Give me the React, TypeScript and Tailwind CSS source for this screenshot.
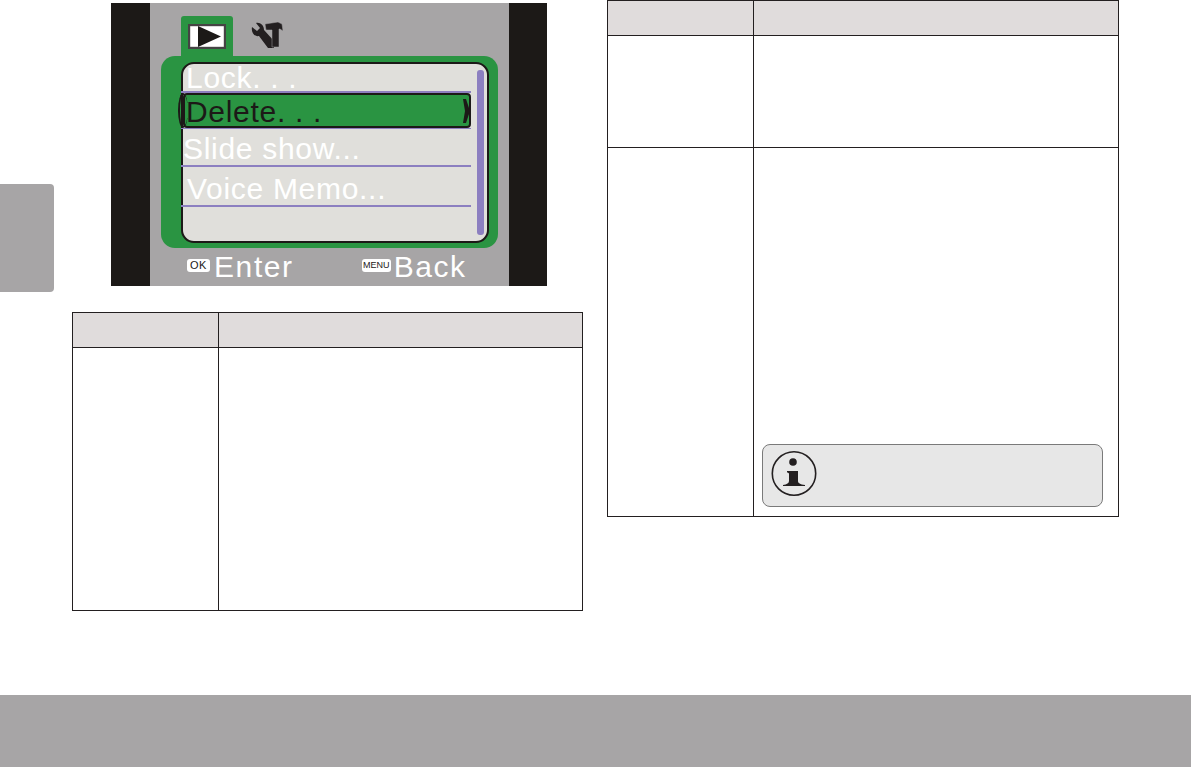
const sans = "font-['Liberation_Sans',Arial,sans-serif]";

function ToolsIcon() {
  return (
    <svg width="33" height="28" viewBox="0 0 33 28" className="ml-[18px] mt-[5px] shrink-0">
      {/* wrench */}
      <path d="M1 6 L6 10 L9 7 L5 2 C9 1 13 4 13 9 L23 20 L23 27 L17 27 L8 15 C3 16 0 11 1 6 Z" fill="#231f20" />
      {/* hammer */}
      <path d="M14 3 L27 1 L31 3 L32 10 L29 8 L28 8 L28 26 L21 26 L21 9 L15 9 Z" fill="#231f20" stroke="#a7a5a6" strokeWidth="0.5" />
    </svg>
  );
}

function PlayBox() {
  return (
    <svg width="38" height="25" viewBox="0 0 38 25">
      <rect x="1" y="1" width="36" height="23" fill="#ffffff" stroke="#454344" strokeWidth="2.4" />
      <path d="M10 2 L33 12.5 L10 23 Z" fill="#1c1917" />
    </svg>
  );
}

function InfoIcon() {
  return (
    <svg width="46" height="46" viewBox="0 0 46 46" className="shrink-0 mb-[3px]">
      <circle cx="23" cy="22.5" r="21.7" fill="none" stroke="#231f20" strokeWidth="1.6" />
      <circle cx="22" cy="11" r="3.8" fill="#231f20" />
      <path d="M16 20 L27 20 L27 30 C27 32 29 33.5 34 34 L34 35 L12 35 L12 34 C16 33.5 18 32 18 30 L18 23 C18 22 17 21.5 16 21.5 Z" fill="#231f20" />
    </svg>
  );
}

function MenuRow({ label, className }: { label: string; className: string }) {
  return (
    <div className={`${className} border-b-2 border-[#8c7fc0] flex items-end`}>
      <span className="text-[30px] leading-[26px] tracking-[0.7px] text-white whitespace-pre">{label}</span>
    </div>
  );
}

function CameraScreen() {
  return (
    <div className={`flex w-[436px] h-[283px] ${sans}`}>
      <div className="w-[39px] bg-[#1c1917]" />
      <div className="w-[359px] bg-[#a7a5a6] flex flex-col">
        <div className="flex h-[40px] mt-[13px] ml-[31px]">
          <div className="w-[52px] h-[40px] bg-[#2a9442] rounded-t-[3px] pl-[7px] pt-[8px]">
            <PlayBox />
          </div>
          <ToolsIcon />
        </div>
        <div className="ml-[11px] w-[337px] h-[192px] bg-[#2a9442] rounded-[14px] pl-[20px] pt-[6px]">
          <div className="relative w-[308px] h-[181px] bg-[#e0dfdb] border-2 border-[#1c1917] rounded-[13px]">
            <div className="w-[290px] -ml-[2px]">
              <MenuRow label="Lock. . ." className="h-[29px] pl-[5px]" />
              <div className="relative h-[35px] ml-[2px] bg-[#2a9442] border-2 border-[#1c1917] rounded-[4px] flex items-center pt-[3px] pl-[1px]">
                <span className="text-[30px] leading-[26px] tracking-[0.7px] text-[#1c1917] whitespace-pre">Delete. . .</span>
                <div className="absolute -left-[7px] -top-[2px] w-[10px] h-[35px] border-2 border-[#1c1917] rounded-[50%] border-r-0" />
                <svg width="7" height="24" viewBox="0 0 7 24" className="absolute -right-[1px] top-[4px]">
                  <path d="M0 0 L3 0 L7 12 L3 24 L0 24 L2 12 Z" fill="#1c1917" />
                </svg>
              </div>
              <MenuRow label="Slide show..." className="h-[39px] pl-[2px] pb-[3px] border-t" />
              <MenuRow label="Voice Memo..." className="h-[40px] pl-[6px] pb-[3px]" />
            </div>
            <div className="absolute left-[294px] top-[6px] w-[7px] h-[165px] rounded-[3px] bg-[#8c7fc0]" />
          </div>
        </div>
        <div className="flex items-center h-[38px] text-white text-[30px] leading-[26px]">
          <div className="ml-[37px] -mt-[3px] w-[23px] h-[13px] rounded-[3px] bg-white text-[#1c1917] text-[11px] leading-[13px] tracking-[0.5px] text-center">OK</div>
          <span className="ml-[4px] tracking-[1.6px]">Enter</span>
          <div className="ml-[68px] -mt-[3px] w-[29px] h-[13px] rounded-[3px] bg-white text-[#1c1917] text-[9px] leading-[13px] text-center">MENU</div>
          <span className="ml-[3px] tracking-[1.5px]">Back</span>
        </div>
      </div>
      <div className="w-[38px] bg-[#1c1917]" />
    </div>
  );
}

export default function App() {
  return (
    <div className="w-[1191px] h-[767px] bg-white flex flex-col overflow-hidden">
      <div className="h-[695px] flex">
        <div className="w-[54px] h-[108px] mt-[184px] bg-[#a7a5a6] rounded-r-[4px] shrink-0" />
        <div className="ml-[18px] w-[511px] shrink-0">
          <div className="ml-[39px] mt-[3px]">
            <CameraScreen />
          </div>
          <table className="mt-[26px] w-[511px] table-fixed border-collapse border border-[#231f20]">
            <colgroup>
              <col className="w-[146px]" />
              <col />
            </colgroup>
            <tbody>
              <tr className="h-[35px] bg-[#e0dcdc]">
                <td className="border border-[#231f20]" />
                <td className="border border-[#231f20]" />
              </tr>
              <tr className="h-[263px]">
                <td className="border border-[#231f20]" />
                <td className="border border-[#231f20]" />
              </tr>
            </tbody>
          </table>
        </div>
        <div className="ml-[24px] w-[511px] shrink-0">
          <table className="w-[512px] table-fixed border-collapse border border-[#231f20]">
            <colgroup>
              <col className="w-[146px]" />
              <col />
            </colgroup>
            <tbody>
              <tr className="h-[35px] bg-[#e0dcdc]">
                <td className="border border-[#231f20]" />
                <td className="border border-[#231f20]" />
              </tr>
              <tr className="h-[112px]">
                <td className="border border-[#231f20]" />
                <td className="border border-[#231f20]" />
              </tr>
              <tr className="h-[369px]">
                <td className="border border-[#231f20]" />
                <td className="border border-[#231f20] align-bottom pl-[8px] pr-[15px] pb-[9px]">
                  <div className="h-[63px] bg-[#e7e7e7] border border-[#7a7a7a] rounded-[8px] flex items-center pl-[8px]">
                    <InfoIcon />
                  </div>
                </td>
              </tr>
            </tbody>
          </table>
        </div>
      </div>
      <div className="h-[72px] bg-[#a7a5a6]" />
    </div>
  );
}
